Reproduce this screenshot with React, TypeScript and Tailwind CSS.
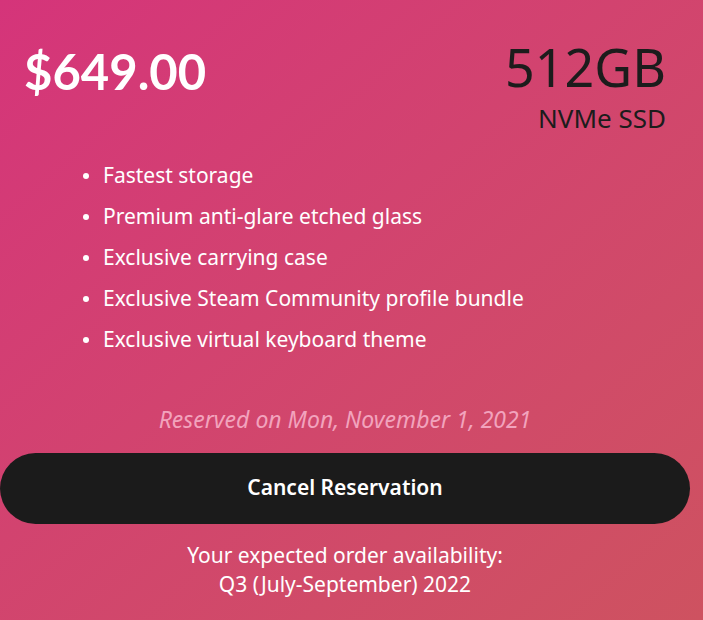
import React from 'react';

const perks = [
  'Fastest storage',
  'Premium anti-glare etched glass',
  'Exclusive carrying case',
  'Exclusive Steam Community profile bundle',
  'Exclusive virtual keyboard theme',
];

export default function App() {
  return (
    <div
      className="min-h-screen w-full bg-gradient-to-br from-[#d5347a] to-[#ce5260] text-white overflow-hidden"
      style={{ fontFamily: '"Noto Sans", "Open Sans", sans-serif' }}
    >
      <div className="w-[690px] pt-[36px]">
        <div className="flex justify-between px-6">
          <div
            className="text-[49px] font-bold leading-none mt-[11px]"
            style={{ fontFamily: 'Lato, "Noto Sans", sans-serif' }}
          >
            $649.00
          </div>
          <div className="flex flex-col items-end text-[#1c1c1c]">
            <div className="text-[52px] leading-[1.2] font-normal">512GB</div>
            <div className="text-[26px] leading-[1.2] mt-[5px]">NVMe SSD</div>
          </div>
        </div>

        {/* perks */}
        <ul className="mt-[25px] pl-[103px] flex flex-col gap-[11px]">
          {perks.map((p) => (
            <li key={p} className="relative text-[21px] leading-[30px]">
              <span className="absolute left-[-20px] top-[13px] w-[6px] h-[6px] rounded-full bg-white" />
              {p}
            </li>
          ))}
        </ul>

        <div className="mt-[50px] text-center italic text-[23px] leading-[30px] text-[#f2a3bd]">
          Reserved on Mon, November 1, 2021
        </div>

        <button className="mt-[19px] w-full h-[71px] rounded-full bg-[#1b1b1b] text-white text-[21px] font-semibold">
          Cancel Reservation
        </button>

        <div className="mt-[17px] text-center text-[21px] leading-[29px]">
          <div>Your expected order availability:</div>
          <div>Q3 (July-September) 2022</div>
        </div>
      </div>
    </div>
  );
}
